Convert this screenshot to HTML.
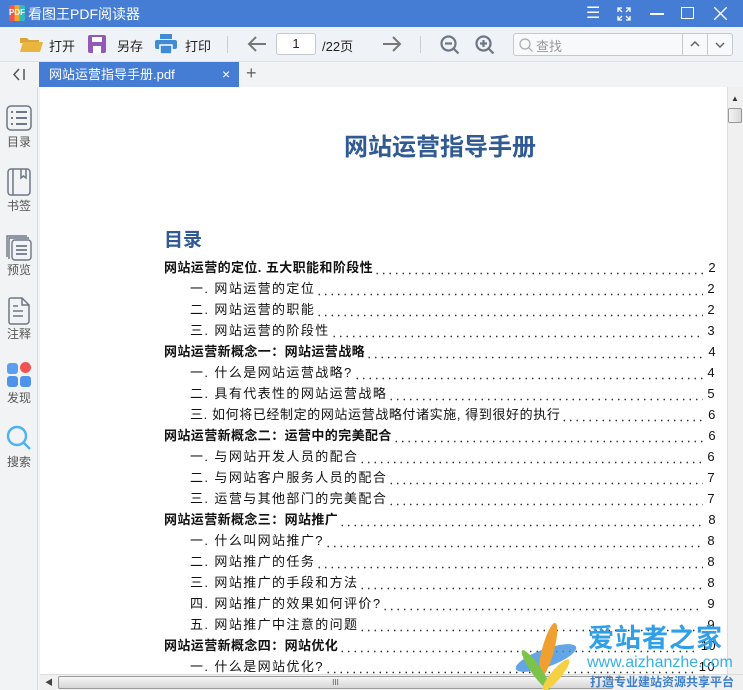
<!DOCTYPE html>
<html><head><meta charset="utf-8"><style>
*{margin:0;padding:0;box-sizing:border-box}
html,body{width:743px;height:690px;overflow:hidden}
body{font-family:"Liberation Sans","Noto Sans CJK SC",sans-serif;background:#f2f3f5;position:relative}
.a{position:absolute;white-space:nowrap}
#title{left:0;top:0;width:743px;height:27px;background:#457cd4;color:#fff;font-size:14px}
#tb{left:0;top:27px;width:743px;height:35px;background:#eff2f6;border-bottom:1px solid #dde1e6;font-size:13px;color:#222}
#tabs{left:0;top:62px;width:743px;height:25px;background:#f1f3f5}
#side{left:0;top:87px;width:38px;height:603px;background:#f2f3f5;border-right:1px solid #d9dbde}
.si{position:absolute;left:0;width:38px;text-align:center;font-size:12px;color:#555}
#page{left:40px;top:87px;width:687px;height:587px;background:#fff;overflow:hidden}
.row{position:absolute;left:124px;width:552px;height:18px;display:flex;font-size:13px;color:#111;line-height:18px;letter-spacing:0.4px;white-space:nowrap}
.row.s{left:150px;width:526px;letter-spacing:1.4px}
.row.b{font-weight:bold}
.row .d{flex:1;height:18px;background:radial-gradient(circle,#333 0.7px,transparent 1px) 0 13px/6.5px 3px repeat-x;margin:0 4px 0 1px}
.row .n{font-weight:normal}
</style></head><body>
<div id="title" class="a">
 <div class="a" style="left:9px;top:5px;width:16px;height:16px;background:linear-gradient(90deg,#e55 0 33%,#f5a623 33% 66%,#3bb 66%);border-radius:2px;font-size:8px;font-weight:bold;color:#fff;line-height:16px;text-align:center">PDF</div>
 <div class="a" style="left:28px;top:4px">看图王PDF阅读器</div>
 <div class="a" style="left:586px;top:3px;font-size:16px">☰</div>
 <svg class="a" style="left:617px;top:7px" width="14" height="14" fill="none" stroke="#fff" stroke-width="1.3"><path d="M1 5V1h4M9 1h4v4M13 9v4H9M5 13H1V9M1 1l4 4M13 1L9 5M13 13L9 9M1 13l4-4"/></svg>
 <div class="a" style="left:650px;top:13px;width:14px;height:1.5px;background:#fff"></div>
 <div class="a" style="left:681px;top:7px;width:13px;height:12px;border:1.5px solid #fff"></div>
 <svg class="a" style="left:714px;top:7px" width="13" height="13" stroke="#fff" stroke-width="1.4"><path d="M0 0L13 13M13 0L0 13"/></svg>
</div>
<div id="tb" class="a">
 <svg class="a" style="left:19px;top:8px" width="24" height="18"><path d="M1 3h7l2 2h10v3H1z" fill="#d9a53a"/><path d="M1 17L4 7h20l-3 10z" fill="#e9b440"/></svg>
 <div class="a" style="left:49px;top:9px">打开</div>
 <svg class="a" style="left:88px;top:8px" width="18" height="18"><rect width="18" height="18" rx="2" fill="#9259b8"/><rect x="4" y="2" width="10" height="5" fill="#fff"/><rect x="5" y="11" width="8" height="7" fill="#fff"/></svg>
 <div class="a" style="left:117px;top:9px">另存</div>
 <svg class="a" style="left:155px;top:7px" width="22" height="20"><rect x="5" y="0" width="12" height="5" fill="#3f8bd6"/><rect x="0" y="6" width="22" height="9" rx="2" fill="#3f8bd6"/><rect x="5" y="11" width="12" height="9" fill="#3f8bd6" stroke="#fff" stroke-width="1.5"/></svg>
 <div class="a" style="left:185px;top:9px">打印</div>
 <div class="a" style="left:227px;top:9px;width:1px;height:17px;background:#ccc"></div>
 <svg class="a" style="left:247px;top:9px" width="20" height="16" fill="none" stroke="#777" stroke-width="2"><path d="M19 8H2M9 1L2 8l7 7"/></svg>
 <div class="a" style="left:276px;top:6px;width:40px;height:22px;background:#fff;border:1px solid #c5c9ce;border-radius:3px;text-align:center;line-height:20px">1</div>
 <div class="a" style="left:322px;top:9px">/22页</div>
 <svg class="a" style="left:382px;top:9px" width="20" height="16" fill="none" stroke="#777" stroke-width="2"><path d="M1 8h17M11 1l7 7-7 7"/></svg>
 <div class="a" style="left:420px;top:9px;width:1px;height:17px;background:#ccc"></div>
 <svg class="a" style="left:440px;top:8px" width="20" height="20" fill="none" stroke="#6d7785" stroke-width="2.2"><circle cx="8.5" cy="8.5" r="7"/><path d="M5 8.5h7M13.5 13.5l5 5"/></svg>
 <svg class="a" style="left:475px;top:8px" width="20" height="20" fill="none" stroke="#6d7785" stroke-width="2.2"><circle cx="8.5" cy="8.5" r="7"/><path d="M5 8.5h7M8.5 5v7M13.5 13.5l5 5"/></svg>
 <div class="a" style="left:513px;top:6px;width:220px;height:23px;background:#f8f9fb;border:1px solid #c5c9ce;border-radius:3px"></div>
 <svg class="a" style="left:519px;top:11px" width="14" height="14" fill="none" stroke="#aaa" stroke-width="1.2"><circle cx="6" cy="6" r="5"/><path d="M9.5 9.5l4 4"/></svg>
 <div class="a" style="left:536px;top:9px;color:#999">查找</div>
 <div class="a" style="left:682px;top:7px;width:1px;height:21px;background:#c5c9ce"></div>
 <div class="a" style="left:707px;top:7px;width:1px;height:21px;background:#c5c9ce"></div>
 <svg class="a" style="left:690px;top:14px" width="10" height="6" fill="none" stroke="#666" stroke-width="1.5"><path d="M1 5l4-4 4 4"/></svg>
 <svg class="a" style="left:715px;top:15px" width="10" height="6" fill="none" stroke="#666" stroke-width="1.5"><path d="M1 1l4 4 4-4"/></svg>
</div>
<div id="tabs" class="a">
 <svg class="a" style="left:12px;top:6px" width="14" height="13" fill="none" stroke="#555" stroke-width="1.5"><path d="M7 1L2 6.5 7 12M12 1v11"/></svg>
 <div class="a" style="left:39px;top:0;width:200px;height:25px;background:#457cd4;color:#fff;font-size:13px;line-height:25px;padding-left:10px">网站运营指导手册.pdf<span style="position:absolute;left:183px;font-size:14px">×</span></div>
 <div class="a" style="left:246px;top:1px;font-size:18px;color:#666">+</div>
</div>
<div id="side" class="a">
 <svg class="a" style="left:6px;top:18px" width="26" height="26" fill="none" stroke="#6d7785" stroke-width="1.5"><rect x="1" y="1" width="24" height="24" rx="4"/><path d="M5 7h2M10 7h11M5 13h2M10 13h11M5 19h2M10 19h11" stroke-width="2"/></svg>
 <div class="si" style="top:46px">目录</div>
 <svg class="a" style="left:7px;top:81px" width="24" height="28" fill="none" stroke="#6d7785" stroke-width="1.5"><rect x="1" y="1" width="22" height="26" rx="3"/><path d="M6 1v26M14 1v9l2.5-2 2.5 2V1"/></svg>
 <div class="si" style="top:110px">书签</div>
 <svg class="a" style="left:6px;top:146px" width="26" height="28" fill="none" stroke="#6d7785" stroke-width="1.4"><path d="M1 24V3h20M3 26V5h20"/><rect x="6" y="7" width="19" height="20" rx="3"/><path d="M10 13h11M10 17h11M10 21h11" stroke-width="1.8"/></svg>
 <div class="si" style="top:174px">预览</div>
 <svg class="a" style="left:8px;top:210px" width="22" height="28" fill="none" stroke="#6d7785" stroke-width="1.5"><path d="M3 1h11l7 7v16a3 3 0 0 1-3 3H3a2 2 0 0 1-2-2V3a2 2 0 0 1 2-2zM14 1v7h7M5 14h10M5 19h10M5 9h5"/></svg>
 <div class="si" style="top:238px">注释</div>
 <div class="a" style="left:7px;top:276px;width:11px;height:11px;border-radius:3px;background:#5b9ef2"></div>
 <div class="a" style="left:20px;top:275px;width:11px;height:11px;border-radius:50%;background:#f25252"></div>
 <div class="a" style="left:7px;top:289px;width:11px;height:11px;border-radius:3px;background:#4f93ea"></div>
 <div class="a" style="left:20px;top:289px;width:11px;height:11px;border-radius:3px;background:#4f93ea"></div>
 <div class="si" style="top:302px">发现</div>
 <svg class="a" style="left:6px;top:338px" width="26" height="26" fill="none" stroke="#4cb2f0" stroke-width="2.4"><circle cx="11" cy="11" r="9"/><path d="M18 18l6 6"/></svg>
 <div class="si" style="top:366px">搜索</div>
</div>
<div id="page" class="a">
 <div class="a" style="left:304px;top:40px;font-size:24px;font-weight:bold;color:#2f5a94">网站运营指导手册</div>
 <div class="a" style="left:124px;top:138px;font-size:19px;font-weight:bold;color:#2f5a94">目录</div>
 <div class="row b" style="top:172px"><span>网站运营的定位. 五大职能和阶段性</span><span class="d"></span><span class="n">2</span></div>
 <div class="row s" style="top:193px"><span>一. 网站运营的定位</span><span class="d"></span><span>2</span></div>
 <div class="row s" style="top:214px"><span>二. 网站运营的职能</span><span class="d"></span><span>2</span></div>
 <div class="row s" style="top:235px"><span>三. 网站运营的阶段性</span><span class="d"></span><span>3</span></div>
 <div class="row b" style="top:256px"><span>网站运营新概念一：网站运营战略</span><span class="d"></span><span class="n">4</span></div>
 <div class="row s" style="top:277px"><span>一. 什么是网站运营战略?</span><span class="d"></span><span>4</span></div>
 <div class="row s" style="top:298px"><span>二. 具有代表性的网站运营战略</span><span class="d"></span><span>5</span></div>
 <div class="row s" style="top:319px;letter-spacing:0.6px"><span>三. 如何将已经制定的网站运营战略付诸实施, 得到很好的执行</span><span class="d"></span><span>6</span></div>
 <div class="row b" style="top:340px"><span>网站运营新概念二：运营中的完美配合</span><span class="d"></span><span class="n">6</span></div>
 <div class="row s" style="top:361px"><span>一. 与网站开发人员的配合</span><span class="d"></span><span>6</span></div>
 <div class="row s" style="top:382px"><span>二. 与网站客户服务人员的配合</span><span class="d"></span><span>7</span></div>
 <div class="row s" style="top:403px"><span>三. 运营与其他部门的完美配合</span><span class="d"></span><span>7</span></div>
 <div class="row b" style="top:424px"><span>网站运营新概念三：网站推广</span><span class="d"></span><span class="n">8</span></div>
 <div class="row s" style="top:445px"><span>一. 什么叫网站推广?</span><span class="d"></span><span>8</span></div>
 <div class="row s" style="top:466px"><span>二. 网站推广的任务</span><span class="d"></span><span>8</span></div>
 <div class="row s" style="top:487px"><span>三. 网站推广的手段和方法</span><span class="d"></span><span>8</span></div>
 <div class="row s" style="top:508px"><span>四. 网站推广的效果如何评价?</span><span class="d"></span><span>9</span></div>
 <div class="row s" style="top:529px"><span>五. 网站推广中注意的问题</span><span class="d"></span><span>9</span></div>
 <div class="row b" style="top:550px"><span>网站运营新概念四：网站优化</span><span class="d"></span><span class="n">10</span></div>
 <div class="row s" style="top:571px"><span>一. 什么是网站优化?</span><span class="d"></span><span>10</span></div>
</div>
<div class="a" style="left:727px;top:87px;width:16px;height:587px;background:#f0f0f0;border-left:1px solid #ddd"></div>
<div class="a" style="left:731px;top:94px;font-size:8px;color:#333">▲</div>
<div class="a" style="left:728px;top:108px;width:14px;height:15px;background:linear-gradient(90deg,#f4f4f4,#d8d8d8);border:1px solid #999;border-radius:2px"></div>
<div class="a" style="left:40px;top:674px;width:703px;height:16px;background:#f0f0f0;border-top:1px solid #ddd"></div>
<div class="a" style="left:45px;top:677px;font-size:8px;color:#444">◀</div>
<div class="a" style="left:58px;top:676px;width:555px;height:13px;background:linear-gradient(#f6f6f6,#d6d6d6);border:1px solid #999;border-radius:2px;font-size:8px;text-align:center;line-height:11px;color:#555">III</div>
<svg class="a" style="left:508px;top:620px" width="80" height="70"><ellipse cx="38" cy="38" rx="32" ry="9" fill="#3d8ee0" transform="rotate(-20 38 38)" opacity=".8"/><ellipse cx="40" cy="30" rx="6" ry="28" fill="#f0a030" transform="rotate(15 40 30)"/><ellipse cx="28" cy="50" rx="5" ry="24" fill="#7cc34a" transform="rotate(-35 28 50)"/><ellipse cx="48" cy="55" rx="5" ry="20" fill="#f5d040" transform="rotate(40 48 55)"/></svg>
<div class="a" style="left:588px;top:624px;font-size:26px;font-weight:bold;color:#2fa0e8;letter-spacing:1px;line-height:28px">爱站者之家</div>
<div class="a" style="left:587px;top:654px;font-size:16px;color:#35b0e8;line-height:18px">www.aizhanzhe.com</div>
<div class="a" style="left:590px;top:675px;font-size:12px;font-weight:bold;color:#3d7fc8;line-height:15px">打造专业建站资源共享平台</div>
</body></html>
